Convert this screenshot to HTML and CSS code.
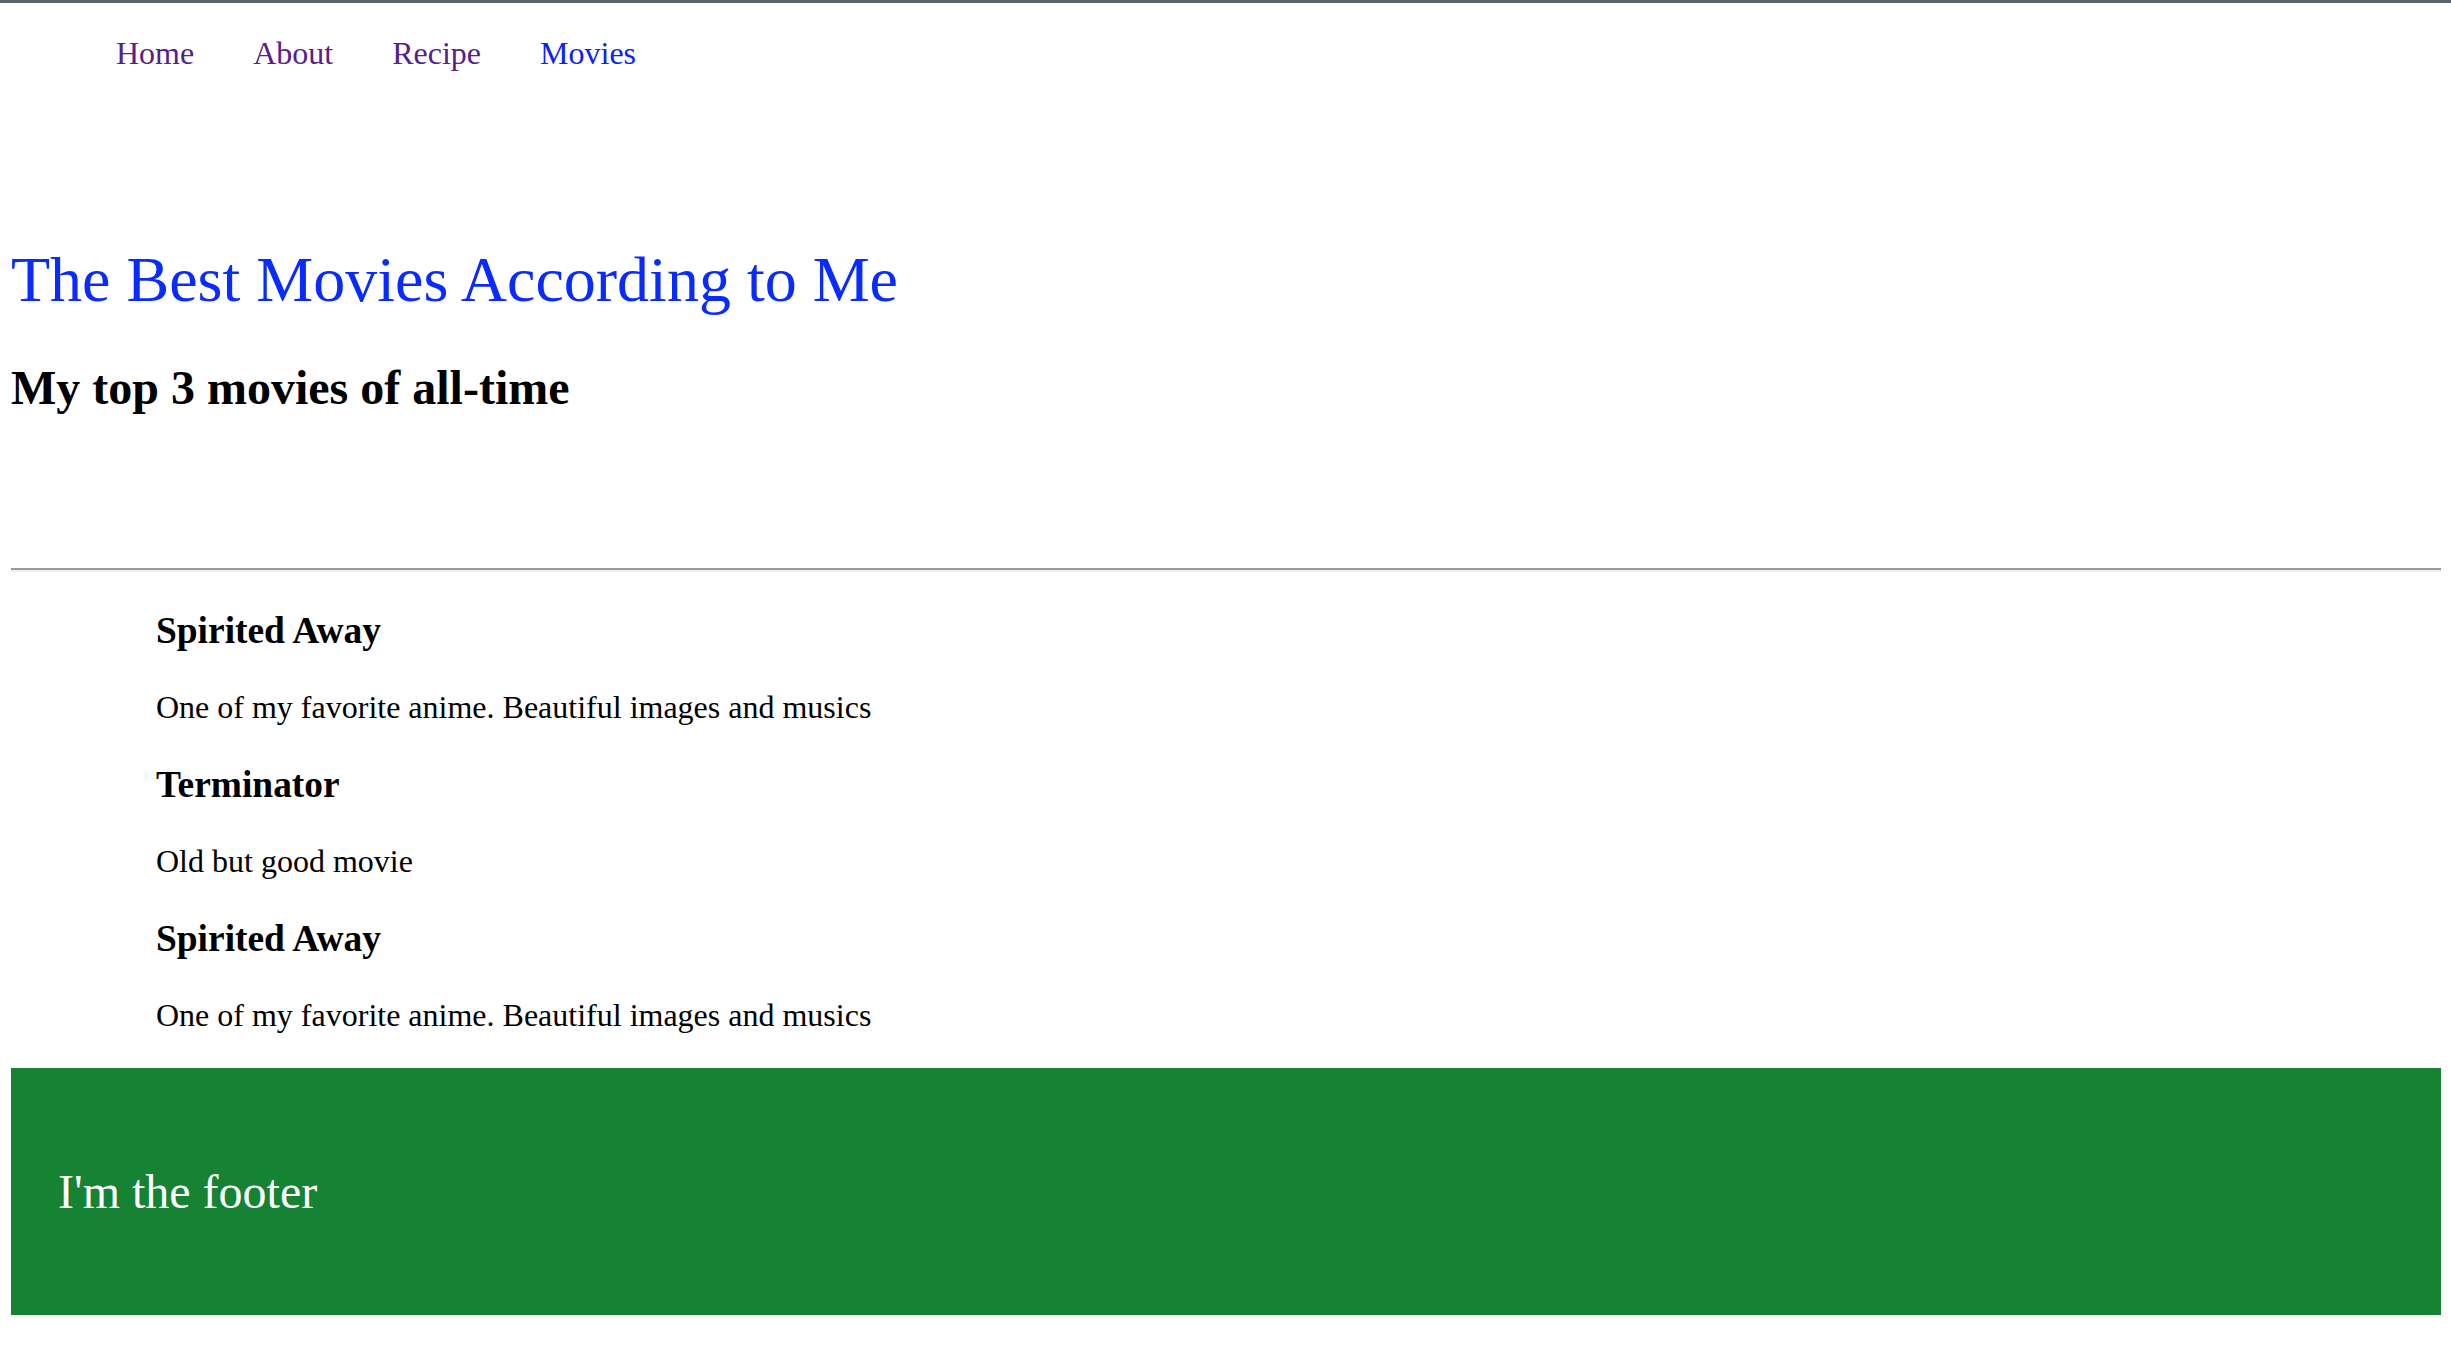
FILE: index.html
```html
<!DOCTYPE html>
<html lang="en" class="page">
<head>
<meta charset="utf-8">
<title>Movies</title>
<link rel="stylesheet" href="styles.css">
</head>
<body class="body">
  <nav class="nav">
    <ul class="nav-list">
      <li><a class="nav-link visited" href="#">Home</a></li>
      <li><a class="nav-link visited" href="#">About</a></li>
      <li><a class="nav-link visited" href="#">Recipe</a></li>
      <li><a class="nav-link current" href="#">Movies</a></li>
    </ul>
  </nav>
  <header class="header">
    <h1 class="title">The Best Movies According to Me</h1>
    <h2 class="subtitle">My top 3 movies of all-time</h2>
  </header>
  <hr class="divider">
  <main class="movies">
    <h3 class="movie-title">Spirited Away</h3>
    <p class="movie-desc">One of my favorite anime. Beautiful images and musics</p>
    <h3 class="movie-title">Terminator</h3>
    <p class="movie-desc">Old but good movie</p>
    <h3 class="movie-title">Spirited Away</h3>
    <p class="movie-desc">One of my favorite anime. Beautiful images and musics</p>
  </main>
  <footer class="footer">
    <p class="footer-text">I'm the footer</p>
  </footer>
</body>
</html>
```
FILE: styles.css
```css
.page {
  border-top: 3px solid #58656d;
  background: #ffffff;
}

.body {
  margin: 0 10px 0 11px;
  font-family: "Liberation Serif", "Times New Roman", serif;
  font-size: 32px;
  color: #000000;
}

.nav-list {
  display: flex;
  gap: 59px;
  list-style: none;
  margin: 32px 0 0;
  padding: 0 0 0 105px;
}

.nav-link {
  text-decoration: none;
}

.nav-link.visited {
  color: #56208d;
}

.nav-link.current {
  color: #0a22f5;
}

.header {
  padding-top: 171px;
}

.title {
  margin: 0;
  font-size: 64px;
  font-weight: normal;
  color: #0a2bff;
}

.subtitle {
  margin: 43px 0 0;
  font-size: 48px;
  font-weight: bold;
}

.divider {
  margin: 153px 0 0;
  border: 0;
  border-top: 2px solid #9a9a9a;
  border-bottom: 2px solid #ededed;
  height: 0;
}

.movies {
  padding-left: 145px;
  padding-top: 0.1px;
}

.movie-title {
  font-size: 37.44px;
  font-weight: bold;
  margin: 37px 0;
}

.movie-desc {
  margin: 32px 0;
}

.footer {
  margin-top: 34px;
  background: #158234;
  color: #ffffff;
  padding: 0.1px 47px;
}

.footer-text {
  margin: 96px 0;
  font-size: 48px;
}
```
